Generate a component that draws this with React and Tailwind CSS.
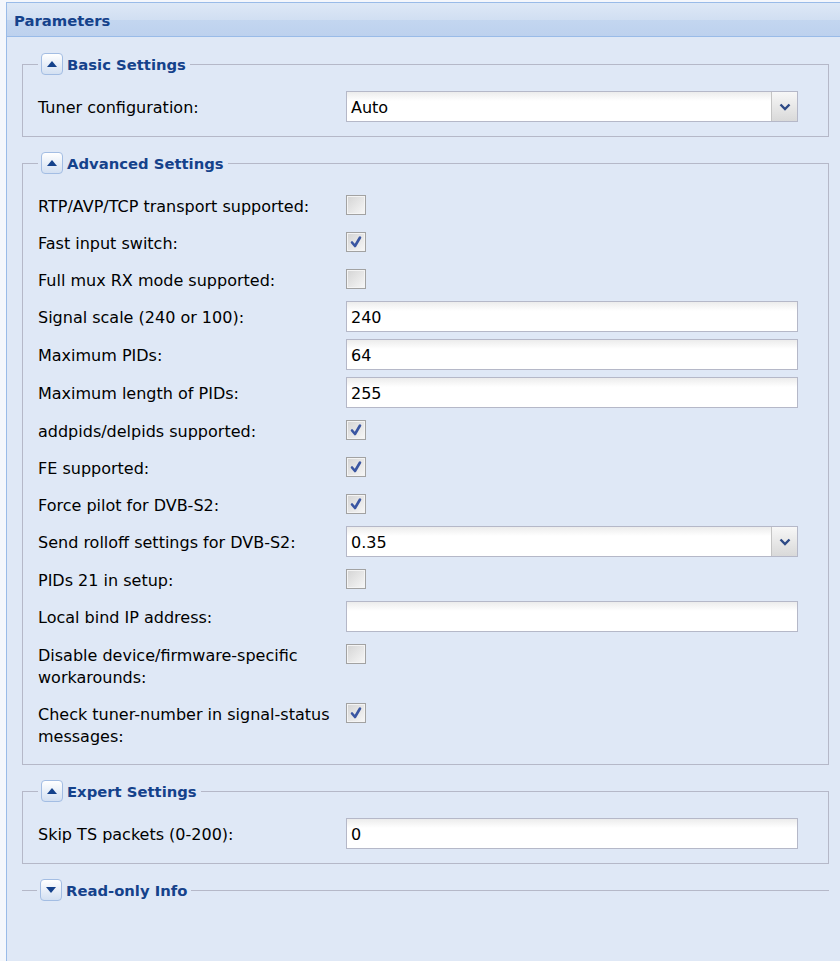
import React from "react";

const Toggle = ({ down }) => (
  <span className="flex h-[22px] w-[22px] items-center justify-center rounded-[4px] border border-[#a3bde3] bg-[linear-gradient(#ffffff,#d3e0f2)]">
    <svg width="10" height="6" viewBox="0 0 10 6">
      {down ? (
        <polygon points="0,0 10,0 5,6" fill="#15428b" />
      ) : (
        <polygon points="0,6 10,6 5,0" fill="#15428b" />
      )}
    </svg>
  </span>
);

const FieldSet = ({ title, collapsed, children }) => (
  <fieldset
    className={
      collapsed
        ? "w-[807px] border-t border-[#b5b8c8] px-[15px] mb-[15px]"
        : "w-[807px] border border-[#b5b8c8] px-[15px] pt-[16px] pb-[7px] mb-[15px]"
    }
  >
    <legend className="px-[3px] pr-[4px]">
      <span className="flex h-[22px] items-center">
        <Toggle down={collapsed} />
        <span className="ml-[4px] pt-[1px] text-[14.8px] font-bold text-[#15428b] leading-[22px]">
          {title}
        </span>
      </span>
    </legend>
    {children}
  </fieldset>
);

const Check = ({ checked, className = "" }) => (
  <span
    className={
      "flex h-[20px] w-[20px] items-center justify-center border border-[#a2a2a2] bg-[linear-gradient(135deg,#d4d4d4,#f7f7f7)] shadow-[inset_0_0_0_1px_#f4f4f4] " +
      className
    }
  >
    {checked && (
      <svg width="14" height="14" viewBox="0 0 14 14">
        <path
          d="M3 7.5 L6 11 L11 2.5"
          fill="none"
          stroke="#3a56a2"
          strokeWidth="2.6"
          strokeLinecap="round"
          strokeLinejoin="round"
        />
      </svg>
    )}
  </span>
);

const TextBox = ({ value }) => (
  <div className="flex h-[31px] w-[452px] items-center border border-[#b5b8c8] bg-[linear-gradient(#ececec,#ffffff_9px)] pl-[4px] pt-[3px] text-black">
    {value}
  </div>
);

const Combo = ({ value }) => (
  <div className="flex h-[31px] w-[452px] border border-[#b5b8c8] bg-[linear-gradient(#ececec,#ffffff_9px)]">
    <div className="flex flex-1 items-center pl-[4px] pt-[3px] text-black">{value}</div>
    <div className="flex w-[26px] items-center justify-center border-l border-[#c4c4c4] bg-[linear-gradient(#f7f7f7,#d9d9d9)]">
      <svg width="12" height="8" viewBox="0 0 12 8">
        <path d="M1.5 1.5 L6 6 L10.5 1.5" fill="none" stroke="#2e4a86" strokeWidth="2.4" />
      </svg>
    </div>
  </div>
);

const Row = ({ label, children, h = "h-[31px]" }) => (
  <div className={"mb-[7px] flex items-center " + h}>
    <div className="w-[308px] pt-[3px] leading-[22px]">{label}</div>
    {children}
  </div>
);

const TwoLineRow = ({ label, checked }) => (
  <div className="mb-[7px] flex items-start pt-[4px] pb-[4px]">
    <div className="w-[308px] pt-[2px] -mb-[2px] leading-[22px]">{label}</div>
    <Check checked={checked} className="mt-[1px]" />
  </div>
);

export default function App() {
  return (
    <div className="h-[961px] w-[840px] overflow-hidden bg-[#f4f7fc] pt-[2px] font-['DejaVu_Sans',sans-serif] text-[16px] text-black">
      <div className="ml-[6px] h-[970px] w-[850px] border-l border-t border-[#99bbe8] bg-[#dfe8f6]">
        <div className="flex h-[34px] items-center border-b border-[#99bbe8] bg-[linear-gradient(#dde8f6,#d1dff2_50%,#c3d6f0_52%,#bdd1ee)] pl-[7px] pt-[3px]">
          <span className="text-[14.8px] font-bold text-[#15428b]">Parameters</span>
        </div>
        <div className="pl-[15px] pt-[16px]">
          <FieldSet title="Basic Settings">
            <Row label="Tuner configuration:">
              <Combo value="Auto" />
            </Row>
          </FieldSet>

          <FieldSet title="Advanced Settings">
            <Row label="RTP/AVP/TCP transport supported:" h="h-[30px]">
              <Check />
            </Row>
            <Row label="Fast input switch:" h="h-[30px]">
              <Check checked />
            </Row>
            <Row label="Full mux RX mode supported:" h="h-[30px]">
              <Check />
            </Row>
            <Row label="Signal scale (240 or 100):">
              <TextBox value="240" />
            </Row>
            <Row label="Maximum PIDs:">
              <TextBox value="64" />
            </Row>
            <Row label="Maximum length of PIDs:">
              <TextBox value="255" />
            </Row>
            <Row label="addpids/delpids supported:" h="h-[30px]">
              <Check checked />
            </Row>
            <Row label="FE supported:" h="h-[30px]">
              <Check checked />
            </Row>
            <Row label="Force pilot for DVB-S2:" h="h-[30px]">
              <Check checked />
            </Row>
            <Row label="Send rolloff settings for DVB-S2:">
              <Combo value="0.35" />
            </Row>
            <Row label="PIDs 21 in setup:" h="h-[30px]">
              <Check />
            </Row>
            <Row label="Local bind IP address:">
              <TextBox value="" />
            </Row>
            <TwoLineRow
              label={
                <>
                  Disable device/firmware-specific
                  <br />
                  workarounds:
                </>
              }
            />
            <TwoLineRow
              checked
              label={
                <>
                  Check tuner-number in signal-status
                  <br />
                  messages:
                </>
              }
            />
          </FieldSet>

          <FieldSet title="Expert Settings">
            <Row label="Skip TS packets (0-200):">
              <TextBox value="0" />
            </Row>
          </FieldSet>

          <FieldSet title="Read-only Info" collapsed />
        </div>
      </div>
    </div>
  );
}
